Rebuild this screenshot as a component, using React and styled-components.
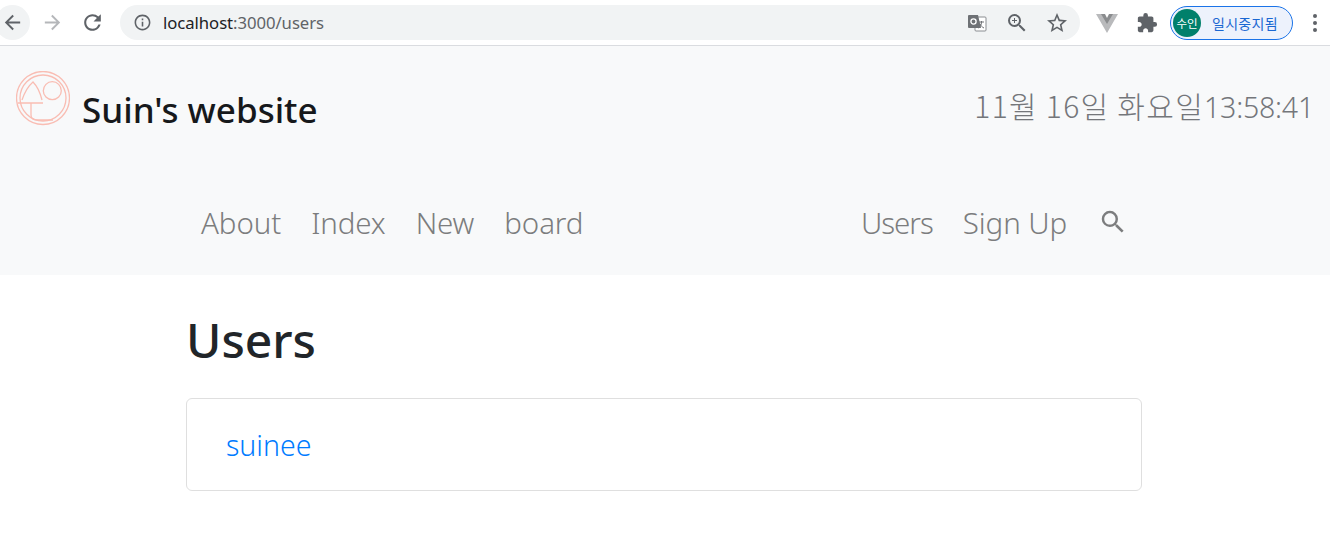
import React from 'react';
import styled, { createGlobalStyle } from 'styled-components';
import {
  MdArrowBack,
  MdArrowForward,
  MdRefresh,
  MdInfoOutline,
  MdZoomIn,
  MdStarBorder,
  MdExtension,
  MdSearch,
} from 'react-icons/md';

const GlobalStyle = createGlobalStyle`
  html, body {
    margin: 0;
    padding: 0;
    background: #fff;
    font-family: "Noto Sans", "Noto Sans CJK KR", sans-serif;
    overflow: hidden;
  }
`;

const Chrome = styled.div`
  height: 45px;
  border-bottom: 1px solid #dadce0;
  display: flex;
  align-items: center;
  padding-right: 13px;
  background: #fff;
`;

const RoundBtn = styled.div`
  width: 35px;
  height: 35px;
  margin-left: ${(p) => p.$ml || 0}px;
  border-radius: 50%;
  background: ${(p) => (p.$active ? '#f1f3f4' : 'transparent')};
  color: ${(p) => (p.$off ? '#b5b7ba' : '#5f6368')};
  display: flex;
  align-items: center;
  justify-content: center;
  flex-shrink: 0;
`;

const Omnibox = styled.div`
  flex: 1;
  height: 35px;
  margin-left: 10px;
  border-radius: 18px;
  background: #f1f3f4;
  display: flex;
  align-items: center;
  padding: 0 3px 0 13px;
  color: #5f6368;
`;

const Url = styled.div`
  margin-left: 11px;
  flex: 1;
  font-size: 16.7px;
  color: #5f6368;
  letter-spacing: -0.05px;
  span { color: #202124; }
`;

const BoxIcon = styled.div`
  width: 40px;
  margin-left: ${(p) => p.$ml || 0}px;
  display: flex;
  justify-content: center;
  color: #5f6368;
`;

const Profile = styled.div`
  width: 123px;
  height: 34px;
  margin-left: 3px;
  box-sizing: border-box;
  border: 1.5px solid #1a73e8;
  border-radius: 17px;
  background: #edf2fc;
  display: flex;
  align-items: center;
  padding-left: 2px;
`;

const Avatar = styled.div`
  width: 28px;
  height: 28px;
  border-radius: 50%;
  background: #00806b;
  color: #fff;
  font-size: 11.5px;
  display: flex;
  align-items: center;
  justify-content: center;
`;

const ProfileName = styled.div`
  margin-left: 11px;
  font-size: 14px;
  letter-spacing: 0.3px;
  color: #1a67d2;
  white-space: nowrap;
`;

const Dots = styled.div`
  margin-left: 20px;
  display: flex;
  flex-direction: column;
  gap: 3px;
  i {
    width: 4px;
    height: 4px;
    border-radius: 50%;
    background: #5f6368;
  }
`;

const Header = styled.header`
  background: #f8f9fa;
  height: 229px;
`;

const TopRow = styled.div`
  height: 126px;
  display: flex;
  align-items: center;
  padding: 0 16px;
  justify-content: space-between;
`;

const Brand = styled.div`
  display: flex;
  align-items: center;
  gap: 12px;
  svg { margin-bottom: 20px; }
`;

const BrandName = styled.div`
  font-size: 35px;
  font-weight: 500;
  color: #16181b;
`;

const Clock = styled.div`
  display: flex;
  align-items: baseline;
  color: #74767a;
  font-weight: 300;
  margin-bottom: 9px;
`;

const ClockDate = styled.span`
  font-size: 30px;
  letter-spacing: 1.3px;
  font-family: "Noto Sans CJK KR", sans-serif;
  font-weight: 300;
`;

const ClockTime = styled.span`
  font-size: 28.5px;
  letter-spacing: -0.2px;
`;

const Nav = styled.nav`
  width: 956px;
  margin-left: 186px;
  padding: 0 14px 0 15px;
  box-sizing: border-box;
  display: flex;
  justify-content: space-between;
  align-items: center;
  height: 103px;
`;

const NavGroup = styled.div`
  display: flex;
  align-items: center;
  gap: 30px;
  padding-bottom: 2px;
`;

const NavLink = styled.a`
  font-size: 29.5px;
  color: #7c7d7e;
  font-weight: 300;
  letter-spacing: ${(p) => (p.$tight ? '-1px' : '-0.1px')};
`;

const SearchIcon = styled(MdSearch)`
  color: #7c7d7e;
  margin: -1px 0 0 1px;
`;

const Main = styled.main`
  width: 956px;
  margin-left: 186px;
`;

const Title = styled.h1`
  margin: 29px 0 22px;
  font-size: 48px;
  line-height: 72px;
  font-weight: 500;
  color: #212529;
`;

const Card = styled.div`
  height: 93px;
  box-sizing: border-box;
  border: 1px solid #dfdfdf;
  border-radius: 6px;
  padding: 0 39px;
  display: flex;
  align-items: center;
`;

const UserLink = styled.a`
  font-size: 28.5px;
  color: #007bff;
  font-weight: 300;
`;

const Logo = () => (
  <svg width="54" height="56" viewBox="0 0 54 56" fill="none" stroke="#f9bdb3" strokeWidth="1.3">
    <circle cx="27" cy="27" r="26.5" />
    <circle cx="27" cy="27" r="23" />
    <path d="M6 29Q10 17 17 11Q23 17 26 29M1.5 32H27M15 32v12q0 5 6 5h16" />
    <circle cx="36.3" cy="19.7" r="9" />
  </svg>
);

const Translate = () => (
  <svg width="20" height="20" viewBox="0 0 20 20">
    <rect x="8" y="4" width="11" height="14" rx="1" fill="#fff" stroke="#8a8d91" />
    <path d="M2 2h9l3 13H2a1 1 0 0 1-1-1V3a1 1 0 0 1 1-1z" fill="#6e7175" />
    <circle cx="6.5" cy="8.5" r="2.6" fill="none" stroke="#fff" strokeWidth="1.3" />
    <path d="M12 9h5M14.5 8v1c0 3-1.5 5-3 6M13 11c1 2 2 3 4 4" stroke="#6e7175" fill="none" />
  </svg>
);

const VueMark = () => (
  <svg width="22" height="20" viewBox="0 0 22 20">
    <path d="M0 1h6l5 8 5-8h6L11 20z" fill="#b9babc" />
    <path d="M5 1h4l2 4 2-4h4l-6 10z" fill="#8a8c8e" />
  </svg>
);

const App = () => (
  <>
    <GlobalStyle />
    <Chrome>
      <RoundBtn $active $ml={-5}><MdArrowBack size={23} /></RoundBtn>
      <RoundBtn $off $ml={5}><MdArrowForward size={23} /></RoundBtn>
      <RoundBtn $ml={5}><MdRefresh size={25} /></RoundBtn>
      <Omnibox>
        <MdInfoOutline size={19} />
        <Url><span>localhost</span>:3000/users</Url>
        <BoxIcon><Translate /></BoxIcon>
        <BoxIcon><MdZoomIn size={24} /></BoxIcon>
        <BoxIcon><MdStarBorder size={24} /></BoxIcon>
      </Omnibox>
      <BoxIcon $ml={7}><VueMark /></BoxIcon>
      <BoxIcon><MdExtension size={22} /></BoxIcon>
      <Profile>
        <Avatar>수인</Avatar>
        <ProfileName>일시중지됨</ProfileName>
      </Profile>
      <Dots><i /><i /><i /></Dots>
    </Chrome>
    <Header>
      <TopRow>
        <Brand>
          <Logo />
          <BrandName>Suin's website</BrandName>
        </Brand>
        <Clock>
          <ClockDate>11월 16일 화요일</ClockDate>
          <ClockTime>13:58:41</ClockTime>
        </Clock>
      </TopRow>
      <Nav>
        <NavGroup>
          <NavLink>About</NavLink>
          <NavLink>Index</NavLink>
          <NavLink>New</NavLink>
          <NavLink>board</NavLink>
        </NavGroup>
        <NavGroup>
          <NavLink $tight>Users</NavLink>
          <NavLink>Sign Up</NavLink>
          <SearchIcon size={30} />
        </NavGroup>
      </Nav>
    </Header>
    <Main>
      <Title>Users</Title>
      <Card><UserLink>suinee</UserLink></Card>
    </Main>
  </>
);

export default App;
